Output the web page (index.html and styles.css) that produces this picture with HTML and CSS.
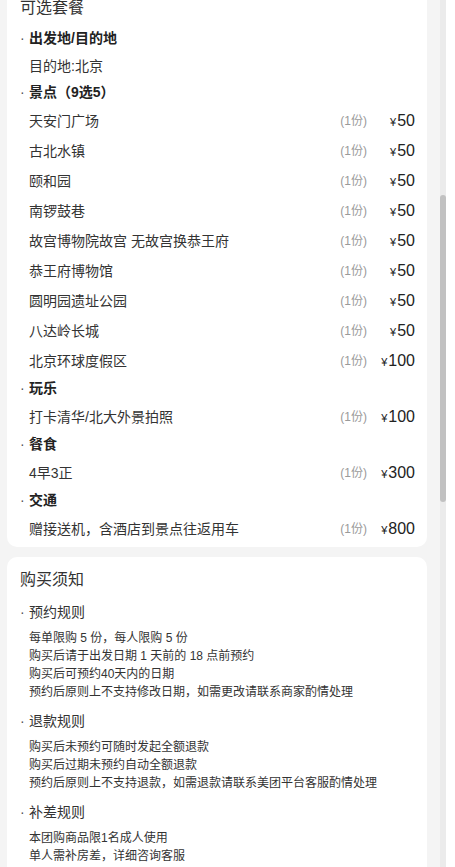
FILE: index.html
```html
<!DOCTYPE html>
<html lang="zh-CN">
<head>
<meta charset="utf-8">
<title>可选套餐</title>
<link rel="stylesheet" href="styles.css">
</head>
<body>
<div class="viewport">
  <div class="page">
    <div class="content">
      <section class="card card-package">
        <h2 class="card-title">可选套餐</h2>

        <div class="group-head"><span class="dot">·</span>出发地/目的地</div>
        <div class="item item-plain"><span class="name">目的地:北京</span></div>

        <div class="group-head"><span class="dot">·</span>景点（9选5）</div>
        <div class="item"><span class="name">天安门广场</span><span class="qty">(1份)</span><span class="price"><i>¥</i>50</span></div>
        <div class="item"><span class="name">古北水镇</span><span class="qty">(1份)</span><span class="price"><i>¥</i>50</span></div>
        <div class="item"><span class="name">颐和园</span><span class="qty">(1份)</span><span class="price"><i>¥</i>50</span></div>
        <div class="item"><span class="name">南锣鼓巷</span><span class="qty">(1份)</span><span class="price"><i>¥</i>50</span></div>
        <div class="item"><span class="name">故宫博物院故宫 无故宫换恭王府</span><span class="qty">(1份)</span><span class="price"><i>¥</i>50</span></div>
        <div class="item"><span class="name">恭王府博物馆</span><span class="qty">(1份)</span><span class="price"><i>¥</i>50</span></div>
        <div class="item"><span class="name">圆明园遗址公园</span><span class="qty">(1份)</span><span class="price"><i>¥</i>50</span></div>
        <div class="item"><span class="name">八达岭长城</span><span class="qty">(1份)</span><span class="price"><i>¥</i>50</span></div>
        <div class="item"><span class="name">北京环球度假区</span><span class="qty">(1份)</span><span class="price"><i>¥</i>100</span></div>

        <div class="group-head"><span class="dot">·</span>玩乐</div>
        <div class="item"><span class="name">打卡清华/北大外景拍照</span><span class="qty">(1份)</span><span class="price"><i>¥</i>100</span></div>

        <div class="group-head"><span class="dot">·</span>餐食</div>
        <div class="item"><span class="name">4早3正</span><span class="qty">(1份)</span><span class="price"><i>¥</i>300</span></div>

        <div class="group-head"><span class="dot">·</span>交通</div>
        <div class="item"><span class="name">赠接送机，含酒店到景点往返用车</span><span class="qty">(1份)</span><span class="price"><i>¥</i>800</span></div>
      </section>

      <section class="card card-notice">
        <h2 class="card-title">购买须知</h2>

        <div class="rule">
          <div class="rule-head"><span class="dot">·</span>预约规则</div>
          <div class="rule-body">
            <p>每单限购 5 份，每人限购 5 份</p>
            <p>购买后请于出发日期 1 天前的 18 点前预约</p>
            <p>购买后可预约40天内的日期</p>
            <p>预约后原则上不支持修改日期，如需更改请联系商家酌情处理</p>
          </div>
        </div>

        <div class="rule">
          <div class="rule-head"><span class="dot">·</span>退款规则</div>
          <div class="rule-body">
            <p>购买后未预约可随时发起全额退款</p>
            <p>购买后过期未预约自动全额退款</p>
            <p>预约后原则上不支持退款，如需退款请联系美团平台客服酌情处理</p>
          </div>
        </div>

        <div class="rule">
          <div class="rule-head"><span class="dot">·</span>补差规则</div>
          <div class="rule-body">
            <p>本团购商品限1名成人使用</p>
            <p>单人需补房差，详细咨询客服</p>
          </div>
        </div>
      </section>
    </div>
  </div>
  <div class="scrollbar"><div class="thumb"></div></div>
</div>
</body>
</html>
```

FILE: styles.css
```css
* { box-sizing: border-box; }

html, body {
  margin: 0;
  padding: 0;
  background: #ffffff;
}

body {
  font-family: "Liberation Sans", "Noto Sans CJK SC", sans-serif;
  color: #333333;
}

.viewport {
  display: flex;
  width: 455px;
  height: 867px;
  overflow: hidden;
}

.page {
  width: 440px;
  height: 867px;
  overflow: hidden;
  background: #f4f4f4;
}

.content {
  margin-top: -19px;
  padding-left: 7px;
  display: flex;
  flex-direction: column;
  gap: 10px;
}

.card {
  width: 420px;
  background: #ffffff;
  border-radius: 10px;
  padding: 0 12px 0 13px;
}

.card-package {
  padding-top: 16px;
  padding-bottom: 3px;
}

.card-notice {
  padding-top: 12px;
  padding-bottom: 20px;
}

.card-title {
  margin: 0;
  font-size: 16px;
  line-height: 22px;
  font-weight: normal;
  color: #333333;
}

.card-package .card-title {
  margin-bottom: 7px;
}

.card-notice .card-title {
  margin-bottom: 11px;
}

.dot {
  display: inline-block;
  width: 9px;
  color: #555555;
  font-weight: normal;
}

.group-head {
  padding: 2px 0 4px;
  font-size: 14px;
  line-height: 20px;
  font-weight: bold;
  color: #222222;
}

.item {
  display: flex;
  align-items: center;
  height: 30px;
  padding-left: 9px;
  font-size: 14px;
  color: #333333;
}

.item-plain {
  height: 28px;
}

.item .name {
  flex: 1;
  line-height: 20px;
}

.item .qty {
  font-size: 12px;
  color: #9a9a9a;
  line-height: 20px;
}

.item .price {
  width: 48px;
  text-align: right;
  font-size: 16px;
  line-height: 20px;
  color: #222222;
}

.item .price i {
  font-style: normal;
  font-size: 11px;
  margin-right: 1px;
}

.rule {
  margin-bottom: 10px;
}

.rule-head {
  font-size: 14px;
  line-height: 20px;
  color: #333333;
  margin-bottom: 7px;
}

.rule-body {
  padding-left: 9px;
  font-size: 12px;
  line-height: 18px;
  color: #333333;
}

.rule-body p {
  margin: 0;
}

.scrollbar {
  width: 6px;
  height: 867px;
  background: #ebebeb;
  padding-top: 195px;
}

.thumb {
  width: 6px;
  height: 307px;
  border-radius: 3px;
  background: #c1c1c1;
}
```
